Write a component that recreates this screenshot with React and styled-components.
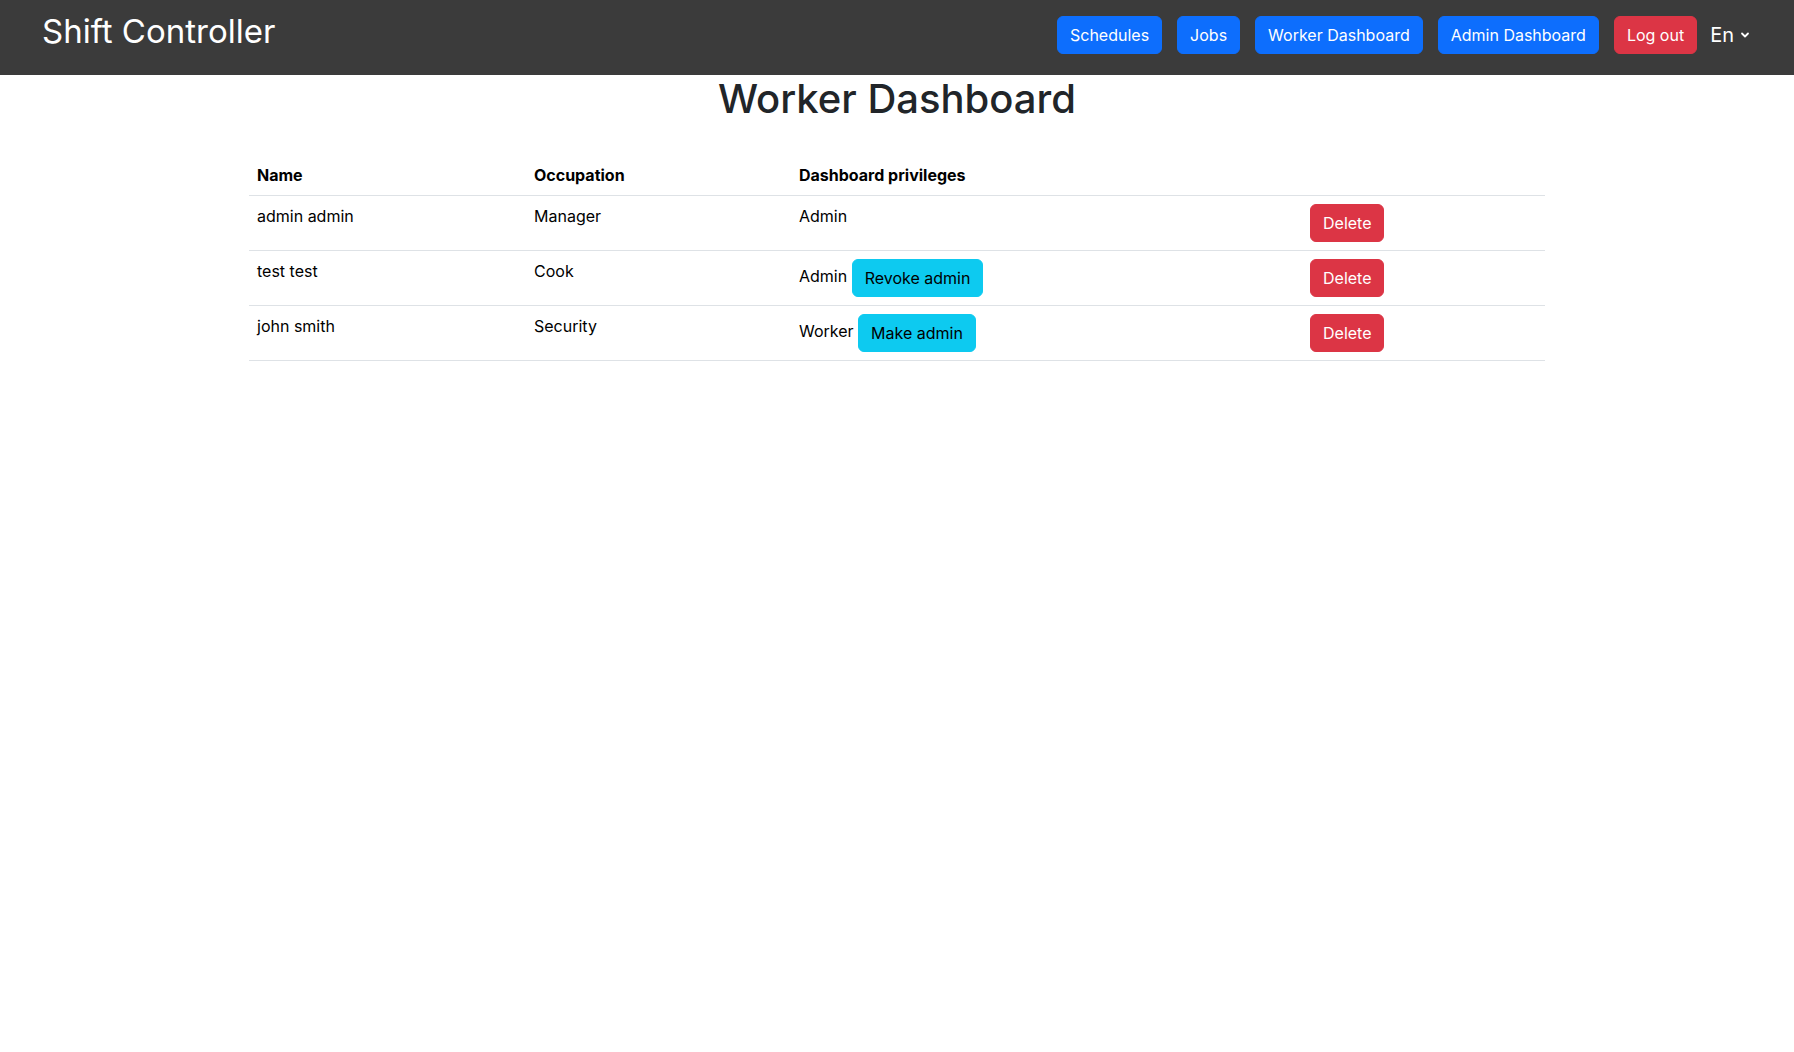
import React from 'react';
import styled, { createGlobalStyle } from 'styled-components';

const GlobalStyle = createGlobalStyle`
  body {
    margin: 0;
    font-family: Inter, "Noto Sans", "Liberation Sans", sans-serif;
    font-size: 16px;
    line-height: 1.5;
    color: #212529;
    background: #fff;
  }
  * { box-sizing: border-box; }
`;

const NavBar = styled.nav`
  display: flex;
  align-items: flex-start;
  justify-content: space-between;
  height: 75px;
  padding: 0 44px 0 42px;
  background: #3b3b3b;
`;

const Brand = styled.div`
  margin-top: 11px;
  font-size: 33px;
  line-height: 40px;
  color: #fff;
`;

const NavLinks = styled.div`
  display: flex;
  align-items: center;
  gap: 15px;
  margin-top: 16px;
`;

const Button = styled.button`
  display: inline-block;
  vertical-align: middle;
  padding: 6px 12px;
  font-family: inherit;
  font-size: 16px;
  line-height: 1.5;
  border: 1px solid ${p => p.$bg};
  border-radius: 6px;
  background: ${p => p.$bg};
  color: ${p => p.$fg || '#fff'};
  cursor: pointer;
`;

const LangToggle = styled.div`
  display: flex;
  align-items: center;
  gap: 6px;
  margin-left: -2px;
  font-size: 20px;
  line-height: 38px;
  color: #fff;
`;

const Main = styled.main`
  max-width: 1320px;
  margin: 0 auto;
  padding: 0 12px;
`;

const Title = styled.h1`
  margin: 0 0 8px;
  text-align: center;
  font-size: 40px;
  font-weight: 500;
  line-height: 1.2;
  color: #212529;
`;

const Table = styled.table`
  width: 100%;
  margin-top: 32px;
  border-collapse: collapse;
  table-layout: fixed;
  color: #000;
  vertical-align: top;
`;

const HeadCell = styled.th`
  padding: 8px;
  text-align: left;
  font-weight: 700;
  border-bottom: 1px solid #dee2e6;
`;

const Cell = styled.td`
  padding: 8px;
  border-bottom: 1px solid #dee2e6;
  vertical-align: top;
`;

const BLUE = '#0d6efd';
const RED = '#dc3545';
const CYAN = '#0dcaf0';

const workers = [
  { name: 'admin admin', occupation: 'Manager', role: 'Admin', action: null },
  { name: 'test test', occupation: 'Cook', role: 'Admin', action: 'Revoke admin' },
  { name: 'john smith', occupation: 'Security', role: 'Worker', action: 'Make admin' },
];

function Chevron() {
  return (
    <svg width="10" height="10" viewBox="0 0 10 10" fill="none">
      <path d="M2 3.5 L5 6.5 L8 3.5" stroke="#fff" strokeWidth="1.8" strokeLinecap="round" strokeLinejoin="round" />
    </svg>
  );
}

export default function App() {
  return (
    <>
      <GlobalStyle />
      <NavBar>
        <Brand>Shift Controller</Brand>
        <NavLinks>
          <Button $bg={BLUE}>Schedules</Button>
          <Button $bg={BLUE}>Jobs</Button>
          <Button $bg={BLUE}>Worker Dashboard</Button>
          <Button $bg={BLUE}>Admin Dashboard</Button>
          <Button $bg={RED}>Log out</Button>
          <LangToggle>
            En <Chevron />
          </LangToggle>
        </NavLinks>
      </NavBar>
      <Main>
        <Title>Worker Dashboard</Title>
        <Table>
          <colgroup>
            <col style={{ width: 277 }} />
            <col style={{ width: 265 }} />
            <col style={{ width: 511 }} />
            <col />
          </colgroup>
          <thead>
            <tr>
              <HeadCell>Name</HeadCell>
              <HeadCell>Occupation</HeadCell>
              <HeadCell>Dashboard privileges</HeadCell>
              <HeadCell />
            </tr>
          </thead>
          <tbody>
            {workers.map(w => (
              <tr key={w.name}>
                <Cell>{w.name}</Cell>
                <Cell>{w.occupation}</Cell>
                <Cell>
                  {w.role}
                  {w.action && (
                    <>
                      {' '}
                      <Button $bg={CYAN} $fg="#000">{w.action}</Button>
                    </>
                  )}
                </Cell>
                <Cell>
                  <Button $bg={RED}>Delete</Button>
                </Cell>
              </tr>
            ))}
          </tbody>
        </Table>
      </Main>
    </>
  );
}
